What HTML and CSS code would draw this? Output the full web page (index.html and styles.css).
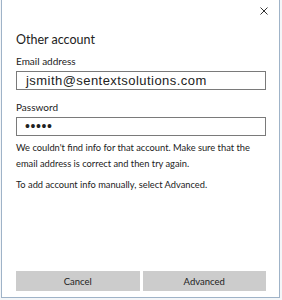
FILE: index.html
```html
<!DOCTYPE html>
<html lang="en">
<head>
  <meta charset="UTF-8">
  <meta name="viewport" content="width=device-width, initial-scale=1.0">
  <title>Other account</title>
  <link rel="stylesheet" href="styles.css">
</head>
<body>
  <div class="window">
    <div class="titlebar">
      <button class="close" aria-label="Close">
        <svg width="8" height="8" viewBox="0 0 8 8"><path d="M0.5 0.5L7.5 7.5M7.5 0.5L0.5 7.5" stroke="#333" stroke-width="1"/></svg>
      </button>
    </div>

    <div class="content">
      <h1>Other account</h1>

      <label class="field-label">Email address</label>
      <div class="field email">jsmith@sentextsolutions.com</div>

      <label class="field-label">Password</label>
      <div class="field password">&#8226;&#8226;&#8226;&#8226;&#8226;</div>

      <p class="message">We couldn't find info for that account. Make sure that the email address is correct and then try again.</p>
      <p class="message">To add account info manually, select Advanced.</p>

      <div class="actions">
        <button>Cancel</button>
        <button>Advanced</button>
      </div>
    </div>
  </div>
</body>
</html>
```

FILE: styles.css
```css
body, html {
  margin: 0;
  height: 100%;
  background: #f4f6f8;
  font-family: Lato, "Noto Sans", Arial, sans-serif;
  color: #222;
}

.window {
  box-sizing: border-box;
  margin-left: 1px;
  width: 279px;
  height: 298px;
  background: #fff;
  border: 1px solid #9fb3c8;
  border-top: none;
  display: flex;
  flex-direction: column;
}

.titlebar {
  display: flex;
  justify-content: flex-end;
  height: 24px;
}

.close {
  border: none;
  background: none;
  padding: 0;
  width: 30px;
  height: 22px;
  display: flex;
  align-items: center;
  justify-content: center;
}

.content {
  flex: 1;
  display: flex;
  flex-direction: column;
  padding: 0 13px 6px 14px;
}

h1 {
  font-size: 12.5px;
  font-weight: normal;
  margin: 7px 0 0;
  line-height: 18px;
}

.field-label {
  font-size: 10px;
  line-height: 14px;
  margin-top: 5px;
}

.field {
  box-sizing: border-box;
  height: 19px;
  border: 1px solid #7a7a7a;
  margin-top: 3px;
  font-size: 13px;
  line-height: 17px;
  padding-left: 9px;
}

.email {
  font-family: "Liberation Sans", Arial, sans-serif;
  letter-spacing: 0.45px;
}

.password {
  font-family: "Liberation Sans", Arial, sans-serif;
  font-size: 14px;
  letter-spacing: 0.6px;
  padding-left: 8px;
}

.field + .field-label {
  margin-top: 10px;
}

.message {
  font-size: 9.3px;
  line-height: 16px;
  margin: 4px 0 0;
}

.message + .message {
  margin-top: 5px;
}

.actions {
  margin-top: auto;
  display: flex;
  gap: 3px;
}

.actions button {
  flex: 1;
  height: 20px;
  border: none;
  background: #cccccc;
  color: #222;
  font-family: Lato, "Noto Sans", Arial, sans-serif;
  font-size: 9.5px;
  padding: 0;
}
```
